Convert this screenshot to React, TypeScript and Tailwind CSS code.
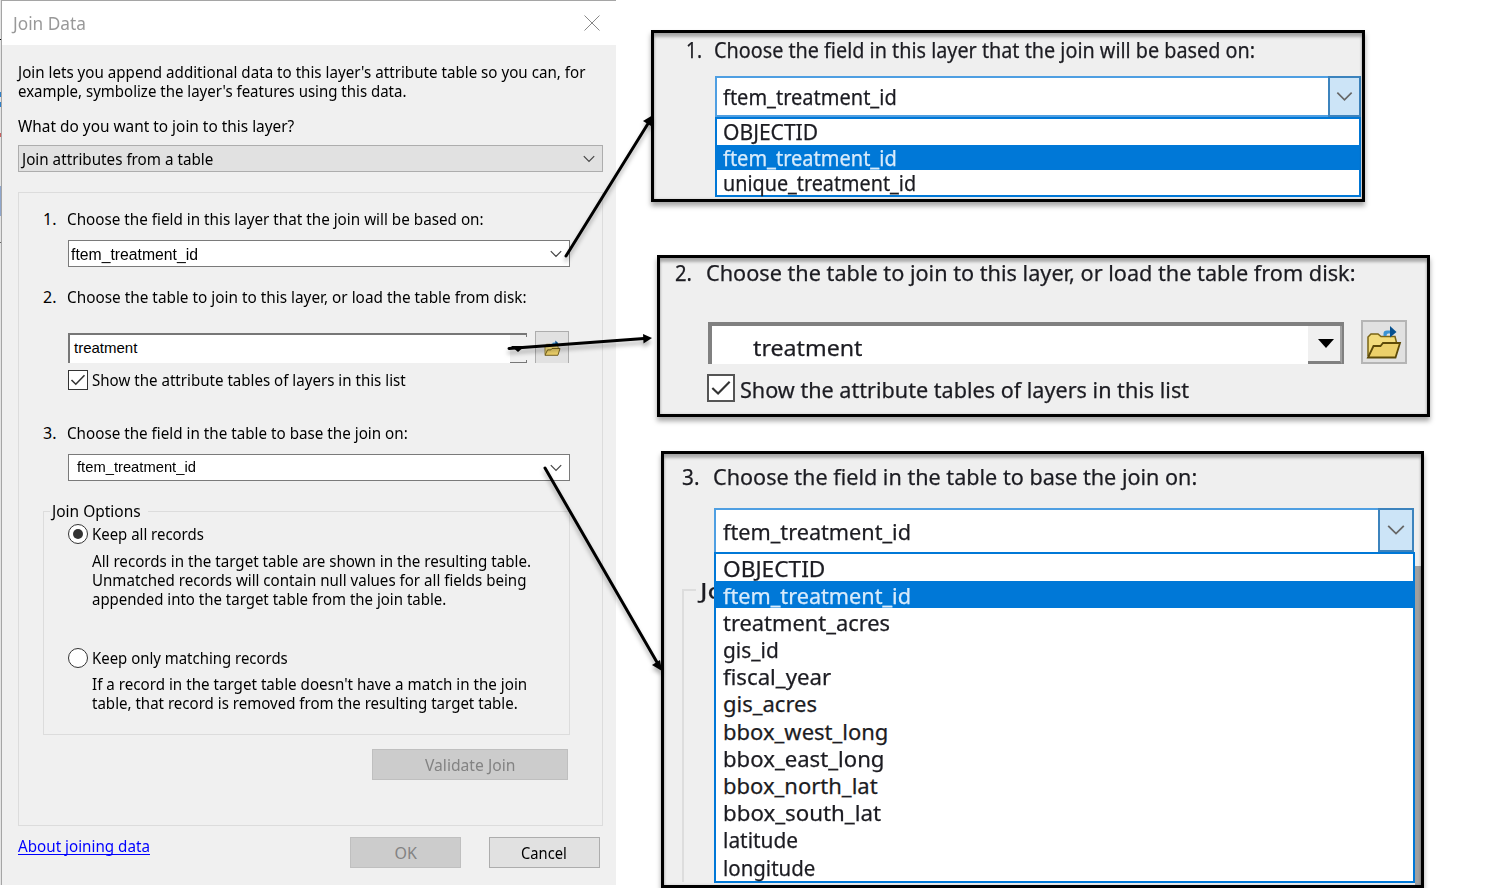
import { useLayoutEffect, useRef } from "react";
import type { ReactNode } from "react";

/* A single line of text, condensed or widened to an exact width. */
function Line({ w, className = "", children }: { w: number; className?: string; children: ReactNode }) {
  const ref = useRef<HTMLSpanElement>(null);
  useLayoutEffect(() => {
    const el = ref.current;
    if (el) el.style.transform = `scaleX(${w / el.offsetWidth})`;
  }, [w]);
  return (
    <span className={`block shrink-0 whitespace-nowrap ${className}`} style={{ width: w }}>
      <span ref={ref} className="inline-block origin-left">{children}</span>
    </span>
  );
}

function Chevron({ className }: { className: string }) {
  return (
    <svg viewBox="0 0 12 8" className={className} fill="none" stroke="currentColor" strokeWidth="1.2">
      <path d="M0.8 1.2 6 6.4 11.2 1.2" />
    </svg>
  );
}

function Folder({ className }: { className: string }) {
  return (
    <svg viewBox="0 0 36 34" className={className}>
      <path d="M2 31V12l3-3h7l3 2.500h14l2 8" fill="#f3dc7c" stroke="#7a6415" strokeWidth="1.500" />
      <path d="M2 32.500 7.500 21h7l2.500-3h17l-4.500 14.500Z" fill="#ecd06a" stroke="#5d4a08" strokeWidth="1.800" />
      <path d="M17.500 11V8.500Q17.500 5.500 21 5.500H25V8.500H22Q20.500 8.500 20.500 11Z" fill="#3c93d3" />
      <path d="M24 1 30.500 7 24 12.500Z" fill="#06508f" />
    </svg>
  );
}

function Check({ className }: { className: string }) {
  return (
    <span className={`block shrink-0 bg-white ${className}`}>
      <svg viewBox="0 0 18 18" className="size-full" fill="none" stroke="#333" strokeWidth="1.6">
        <path d="M2.5 9 6.8 13.2 15.5 4.3" />
      </svg>
    </span>
  );
}

function Radio({ checked = false }: { checked?: boolean }) {
  return (
    <span className="flex size-5 shrink-0 items-center justify-center rounded-full border border-[#333] bg-white">
      {checked && <span className="size-[10px] rounded-full bg-[#333]" />}
    </span>
  );
}

function JoinDialog() {
  return (
    <div className="h-[885px] w-[615px] shrink-0 border-t border-l border-[#a5a5a5] bg-[#f0f0f0] text-[16px] leading-[19px] text-black">
      <header className="flex h-[44px] items-start justify-between bg-white pr-[16px] pl-[11px]">
        <Line w={73} className="pt-[10px] text-[17.5px] leading-[25px] text-[#999]">Join Data</Line>
        <svg viewBox="0 0 16 16" className="mt-[14px] size-4" stroke="#888" strokeWidth="1">
          <path d="M0.5 0.5 15.5 15.5M15.5 0.5 0.5 15.5" />
        </svg>
      </header>

      <div className="pt-[18px] pl-4">
        <Line w={567}>Join lets you append additional data to this layer's attribute table so you can, for</Line>
        <Line w={388}>example, symbolize the layer's features using this data.</Line>
        <Line w={276} className="mt-4">What do you want to join to this layer?</Line>
        <div className="mt-[9px] flex h-[27px] w-[585px] items-center justify-between border border-[#adadad] bg-[#e1e1e1] pr-[7px] pl-[3px]">
          <Line w={191} className="pt-px">Join attributes from a table</Line>
          <Chevron className="h-2 w-3 text-[#444]" />
        </div>

        <section className="mt-5 h-[634px] w-[585px] border border-[#dcdcdc] pt-[17px] pl-6">
          <div className="flex">
            <Line w={13}>1.</Line>
            <Line w={417} className="ml-[11px]">Choose the field in this layer that the join will be based on:</Line>
          </div>
          <div className="mt-[11px] ml-[25px] flex h-[27px] w-[502px] items-center justify-between border border-[#7a7a7a] bg-white pr-[7px] pl-[2px] font-['Liberation_Sans',sans-serif]">
            <Line w={127} className="pt-[2px]">ftem_treatment_id</Line>
            <Chevron className="h-2 w-3 text-[#444]" />
          </div>

          <div className="mt-[21px] flex">
            <Line w={13}>2.</Line>
            <Line w={460} className="ml-[11px]">Choose the table to join to this layer, or load the table from disk:</Line>
          </div>
          <div className="mt-[24px] ml-[25px] flex h-8 w-[502px] items-end">
            <div className="flex h-[30px] w-[459px] justify-between border-t-2 border-l-2 border-[#777] bg-white">
              <Line w={63} className="pt-[3px] pl-[4px] font-['Liberation_Sans',sans-serif] text-[15px]">treatment</Line>
              <div className="flex w-[17px] flex-col justify-between bg-[#f0f0f0]">
                <span className="ml-auto block h-[2px] w-px bg-[#777]" />
                <svg viewBox="0 0 17 8" className="h-2 w-[17px]"><path d="M1 1h14L8 7Z" fill="#000" /></svg>
                <span className="block h-[3px] border-r border-b border-[#777]" />
              </div>
            </div>
            <div className="ml-2 flex h-8 w-[34px] items-end border border-b-0 border-[#adadad] bg-[#e1e1e1] pb-[7px] pl-[8px]">
              <Folder className="h-[16px] w-[17px]" />
            </div>
          </div>
          <div className="mt-[7px] ml-[25px] flex h-5 items-center">
            <Check className="size-5 border border-[#333]" />
            <Line w={314} className="ml-1">Show the attribute tables of layers in this list</Line>
          </div>

          <div className="mt-[34px] flex">
            <Line w={13}>3.</Line>
            <Line w={341} className="ml-[11px]">Choose the field in the table to base the join on:</Line>
          </div>
          <div className="mt-[11px] ml-[25px] flex h-[27px] w-[502px] items-center justify-between border border-[#7a7a7a] bg-white pr-[7px] pl-[8px] font-['Liberation_Sans',sans-serif] text-[15px]">
            <Line w={119} className="pb-[2px]">ftem_treatment_id</Line>
            <Chevron className="h-2 w-3 text-[#444]" />
          </div>

          <div className="mt-[30px] h-[224px] w-[527px] border border-[#dcdcdc]">
            <div className="-mt-[10px] ml-[6px] w-[98px] bg-[#f0f0f0] pl-[2px]">
              <Line w={89}>Join Options</Line>
            </div>
            <div className="mt-[3px] ml-6 flex h-5 items-center">
              <Radio checked />
              <Line w={112} className="ml-1">Keep all records</Line>
            </div>
            <div className="mt-[8px] ml-12">
              <Line w={439}>All records in the target table are shown in the resulting table.</Line>
              <Line w={434}>Unmatched records will contain null values for all fields being</Line>
              <Line w={354}>appended into the target table from the join table.</Line>
            </div>
            <div className="mt-[39px] ml-6 flex h-5 items-center">
              <Radio />
              <Line w={196} className="ml-1">Keep only matching records</Line>
            </div>
            <div className="mt-[7px] ml-12">
              <Line w={435}>If a record in the target table doesn't have a match in the join</Line>
              <Line w={426}>table, that record is removed from the resulting target table.</Line>
            </div>
          </div>
          <button className="mt-[14px] ml-[329px] flex h-[31px] w-[196px] items-center justify-center border border-[#bfbfbf] bg-[#ccc] text-[#838383]">
            <Line w={90} className="pt-[2px] text-left">Validate Join</Line>
          </button>
        </section>

        <footer className="flex pt-[11px]">
          <a className="h-[18px] w-[132px] border-b border-[#0000ff] text-[#0000ff]">
            <Line w={132}>About joining data</Line>
          </a>
          <button className="ml-[200px] flex h-[31px] w-[111px] items-center justify-center border border-[#bfbfbf] bg-[#ccc] text-[#838383]">
            <Line w={22} className="pt-[2px] text-left">OK</Line>
          </button>
          <button className="ml-7 flex h-[31px] w-[111px] items-center justify-center border border-[#adadad] bg-[#e1e1e1]">
            <Line w={46} className="-ml-[2px] pt-[2px] text-left">Cancel</Line>
          </button>
        </footer>
      </div>
    </div>
  );
}

const fieldRows: [string, number][] = [
  ["OBJECTID", 102],
  ["ftem_treatment_id", 188],
  ["treatment_acres", 167],
  ["gis_id", 56],
  ["fiscal_year", 108],
  ["gis_acres", 94],
  ["bbox_west_long", 165],
  ["bbox_east_long", 161],
  ["bbox_north_lat", 155],
  ["bbox_south_lat", 158],
  ["latitude", 75],
  ["longitude", 92],
];

const layerRows: [string, number][] = [
  ["OBJECTID", 95],
  ["ftem_treatment_id", 174],
  ["unique_treatment_id", 193],
];

/* Black framed enlargement with a soft drop shadow and a shaded inner top edge. */
function Callout({ className, children }: { className: string; children: ReactNode }) {
  return (
    <div className={`shadow-[0_4px_5px_rgba(0,0,0,0.35)] ${className}`}>
      <div className="relative size-full overflow-hidden border-[3px] border-black bg-[#efefef] text-[#1c1c22] [-webkit-text-stroke:0.25px]">
        {children}
        <div className="pointer-events-none absolute inset-0 shadow-[inset_0_4px_3px_rgba(0,0,0,0.27),inset_0_0_3px_rgba(0,0,0,0.15)]" />
      </div>
    </div>
  );
}

function Callouts() {
  return (
    <div className="pt-[30px] pl-[35px]">
      <Callout className="h-[172px] w-[714px] text-[21.5px] leading-[25px]">
        <div className="flex pt-[4px] pl-8">
          <Line w={16}>1.</Line>
          <Line w={541} className="ml-[12px]">Choose the field in this layer that the join will be based on:</Line>
        </div>
        <div className="mt-[14px] ml-[61px] flex h-[41px] w-[646px] border-2 border-[#4f9fe2] bg-white">
          <Line w={174} className="pt-[6px] pl-[6px]">ftem_treatment_id</Line>
          <div className="-my-[2px] -mr-[2px] ml-auto flex w-[33px] items-center justify-center border-2 border-[#3c83bd] bg-[#cce4f7]">
            <Chevron className="h-[11px] w-[17px] text-[#666]" />
          </div>
        </div>
        <div className="ml-[61px] h-[80px] w-[646px] border-2 border-[#0078d7] bg-white leading-[26px]">
          {layerRows.map(([t, w], i) => (
            <div key={t} className={i === 1 ? "h-[25.5px] bg-[#0078d7] pl-[6px] text-[#d8ebfb]" : "h-[25.5px] pl-[6px]"}>
              <Line w={w}>{t}</Line>
            </div>
          ))}
        </div>
      </Callout>

      <Callout className="mt-[53px] ml-[6px] h-[162px] w-[773px] text-[21.5px] leading-[25px]">
        <div className="flex pt-[2px] pl-[15px]">
          <Line w={17}>2.</Line>
          <Line w={650} className="ml-[14px]">Choose the table to join to this layer, or load the table from disk:</Line>
        </div>
        <div className="mt-[35px] ml-[48px] flex h-[45px]">
          <div className="mt-[2px] flex h-[42px] w-[636px] justify-between border-t-4 border-r-2 border-l-4 border-[#808080] bg-white">
            <Line w={109} className="ml-[41px] pt-[9px]">treatment</Line>
            <div className="flex w-[34px] items-center justify-center border-r-2 border-b-[3px] border-[#808080] border-r-[#a0a0a0] bg-[#f0f0f0] pl-[4px]">
              <svg viewBox="0 0 16 9" className="h-[9px] w-4"><path d="M0 0h16L8 9Z" /></svg>
            </div>
          </div>
          <div className="ml-[17px] flex h-[44px] w-[46px] items-center justify-center border-2 border-[#b5b5b5] bg-[#e1e1e1]">
            <Folder className="h-[34px] w-[36px]" />
          </div>
        </div>
        <div className="mt-[9px] ml-[47px] flex h-7 items-center">
          <Check className="size-7 border-2 border-[#555]" />
          <Line w={449} className="ml-[5px] pt-[2px]">Show the attribute tables of layers in this list</Line>
        </div>
      </Callout>

      <Callout className="mt-[34px] ml-[10px] h-[437px] w-[763px] text-[22px] leading-[27px]">
        <div className="flex pt-[9px] pl-[18px]">
          <Line w={17}>3.</Line>
          <Line w={484} className="ml-[14px]">Choose the field in the table to base the join on:</Line>
        </div>
        <div className="mt-[18px] ml-[50px] flex h-[44px] w-[700px] border-2 border-b-0 border-[#4f9fe2] bg-white">
          <Line w={188} className="pt-[8px] pl-[7px]">ftem_treatment_id</Line>
          <div className="-mt-[2px] -mr-[2px] ml-auto flex w-[36px] items-center justify-center border-2 border-[#3c83bd] bg-[#cce4f7]">
            <Chevron className="h-[12px] w-[18px] text-[#666]" />
          </div>
        </div>
        <div className="flex">
          <div className="h-[330px] w-[50px] shrink-0 pl-[18px]">
            <div className="flex h-full pt-[25px]">
              <div className="mt-[12px] w-[14px] shrink-0 border-t-2 border-l-2 border-[#ddd]" />
              <Line w={24} className="ml-[4px]">Jo</Line>
            </div>
          </div>
          <div className="z-10 h-[331px] w-[701px] shrink-0 border-2 border-[#0078d7] bg-white">
            {fieldRows.map(([t, w], i) => (
              <div key={t} className={i === 1 ? "h-[27.2px] bg-[#0078d7] pl-[7px] text-[#d8ebfb]" : "h-[27.2px] pl-[7px]"}>
                <Line w={w} className="pt-[0.5px]">{t}</Line>
              </div>
            ))}
          </div>
          <div className="mt-[14px] h-[320px] w-[6px] bg-[#a0a0a0]" />
        </div>
      </Callout>
    </div>
  );
}

function Arrows() {
  return (
    <svg viewBox="0 0 1495 888" className="pointer-events-none absolute inset-0 h-[888px] w-[1495px] drop-shadow-[0_4px_2px_rgba(0,0,0,0.3)]" stroke="#000" strokeWidth="3" strokeLinecap="round">
      <path d="M566 256 649 122M509 348.500 644 338.500M545 468 658 664" />
      <g stroke="none">
        <path d="M653 115 651 126 643 121Z" />
        <path d="M652 338 643.500 343.500 643 334Z" />
        <path d="M662 671 652 665 660 660Z" />
      </g>
    </svg>
  );
}

export default function App() {
  return (
    <div className="relative flex h-[888px] w-[1495px] overflow-hidden bg-white font-['Noto_Sans',sans-serif]">
      <div className="flex h-[885px] w-px shrink-0 flex-col bg-[#e4e4e4]">
        <span className="mt-[39px] h-px bg-black" />
        <span className="mt-[52px] h-[5px] bg-[#2f7fc8]" />
        <span className="mt-[5px] h-[5px] bg-[#2f7fc8]" />
        <span className="mt-[26px] h-[4px] bg-[#c86060]" />
        <span className="mt-[49px] h-[30px] bg-[#8fa6cc]" />
        <span className="mt-[26px] h-px bg-[#666]" />
      </div>
      <JoinDialog />
      <Callouts />
      <Arrows />
    </div>
  );
}
